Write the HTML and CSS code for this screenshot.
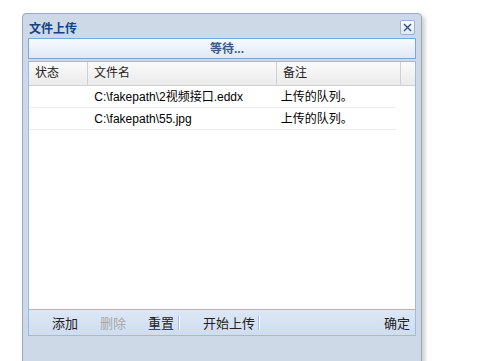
FILE: index.html
```html
<!DOCTYPE html>
<html lang="zh">
<head>
  <meta charset="UTF-8" />
  <title>文件上传</title>
  <link rel="stylesheet" href="styles.css">
</head>
<body>
  <div class="win">
    <div class="win-head">
      <span class="win-title">文件上传</span>
      <span class="win-close">
        <svg width="9" height="9" viewBox="0 0 9 9"><path d="M1 1L8 8M8 1L1 8" stroke="#2d4c8a" stroke-width="1.4"/></svg>
      </span>
    </div>
    <div class="win-body">
      <div class="progress">等待...</div>
      <div class="grid">
        <div class="grid-head">
          <div class="col c1">状态</div>
          <div class="col c2">文件名</div>
          <div class="col c3">备注</div>
          <div class="col c4"></div>
        </div>
        <div class="grid-rows">
          <div class="row">
            <div class="cell c1"></div>
            <div class="cell c2">C:\fakepath\2视频接口.eddx</div>
            <div class="cell c3">上传的队列。</div>
          </div>
          <div class="row">
            <div class="cell c1"></div>
            <div class="cell c2">C:\fakepath\55.jpg</div>
            <div class="cell c3">上传的队列。</div>
          </div>
        </div>
        <div class="toolbar">
          <span class="btn">添加</span>
          <span class="btn disabled">删除</span>
          <span class="btn tight">重置</span>
          <span class="sep"></span>
          <span class="btn wide">开始上传</span>
          <span class="sep"></span>
          <span class="fill"></span>
          <span class="btn ok">确定</span>
        </div>
      </div>
    </div>
  </div>
</body>
</html>
```

FILE: styles.css
```css
body {
  margin: 0;
  background: #fff;
  font-family: "Liberation Sans", "Noto Sans CJK SC", sans-serif;
  font-size: 12px;
  overflow: hidden;
}
.win {
  margin: 13px 0 0 22px;
  width: 398px;
  height: 380px;
  background: #ced9e7;
  border: 1px solid #99a9c0;
  border-radius: 4px 4px 0 0;
  box-shadow: 3px 3px 4px rgba(0, 0, 0, 0.2);
}
.win-head {
  display: flex;
  align-items: center;
  justify-content: space-between;
  height: 23px;
  padding: 0 6px 0 6px;
}
.win-title {
  font-weight: bold;
  color: #15428b;
  font-size: 12px;
  margin-top: 3px;
}
.win-close {
  display: flex;
  align-items: center;
  justify-content: center;
  width: 13px;
  height: 13px;
  margin-top: 3px;
  background: linear-gradient(#fdfeff, #dfe8f4);
  border: 1px solid #99b3d6;
  border-radius: 2px;
}
.win-body {
  padding: 1px 5px 0 5px;
}
.progress {
  height: 19px;
  line-height: 20px;
  padding-left: 10px;
  text-align: center;
  font-weight: bold;
  color: #3b5a8a;
  border: 1px solid #7fa4d6;
  background: linear-gradient(#f8fbfe, #dfe8f5);
}
.grid {
  margin-top: 2px;
  border: 1px solid #99bbe8;
  background: #fff;
  height: 273px;
  display: flex;
  flex-direction: column;
}
.grid-head {
  display: flex;
  height: 23px;
  background: linear-gradient(#fafafa, #ebebeb);
  border-bottom: 1px solid #d0d0d0;
}
.col {
  line-height: 23px;
  padding-left: 6px;
  color: #222;
  border-right: 1px solid #d0d0d0;
  box-sizing: border-box;
}
.c1 { width: 59px; }
.c2 { width: 189px; }
.c3 { width: 124px; }
.c4 { flex: 1; border-right: none; }
.grid-rows {
  flex: 1;
}
.row {
  display: flex;
  width: 367px;
  height: 21px;
  border-bottom: 1px solid #ededed;
}
.cell {
  line-height: 22px;
  padding-left: 7px;
  box-sizing: border-box;
  color: #000;
}
.toolbar {
  display: flex;
  align-items: center;
  height: 25px;
  border-top: 1px solid #99bbe8;
  background: linear-gradient(#dde7f5, #d0ddef);
  padding: 0 4px 0 12px;
  font-size: 13px;
}
.btn {
  color: #222;
  padding: 0 11px;
}
.btn.disabled {
  color: #a8a8a8;
}
.btn.tight {
  padding-right: 3px;
}
.btn.wide {
  padding: 0 2px 0 22px;
}
.sep {
  width: 1px;
  height: 14px;
  background: #9ec0ec;
  border-right: 1px solid #fff;
  margin: 0 1px;
}
.fill {
  flex: 1;
}
.btn.ok {
  padding: 0 1px 0 0;
}
```
